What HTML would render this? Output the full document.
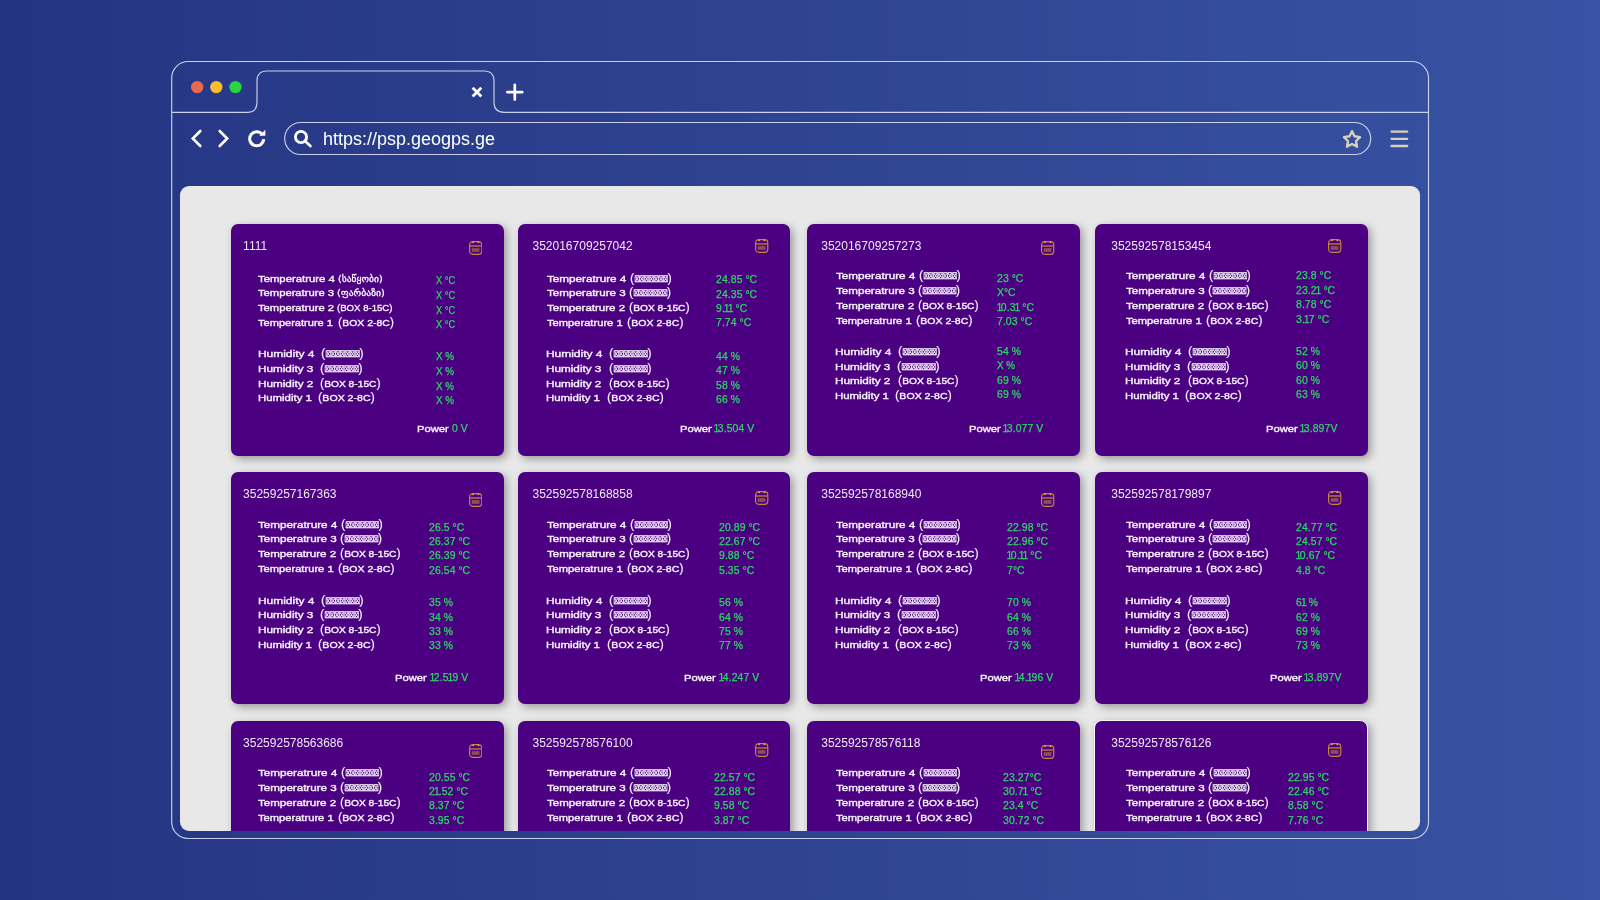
<!DOCTYPE html>
<html lang="en"><head><meta charset="utf-8"><title>psp.geogps.ge</title>
<style>
html,body{margin:0;padding:0}
body{width:1600px;height:900px;overflow:hidden;position:relative;background:linear-gradient(90deg,#243482 0%,#2e4492 50%,#3853a3 100%);font-family:"Liberation Sans",sans-serif}
#frame{position:absolute;left:0;top:0}
#content{position:absolute;left:180px;top:185.6px;width:1240.2px;height:645.2px;background:#e8e8e8;border-radius:9px;overflow:hidden}
#inner{position:absolute;left:-180px;top:-185.6px;width:1600px;height:900px;will-change:transform}
.card{position:absolute;background:#4b0082;border-radius:7px;box-shadow:3px 3px 9px rgba(0,0,0,.34)}
.card.hl{box-sizing:border-box;border:1.6px solid #f8f6fa;border-radius:8px}
.t{position:absolute;white-space:pre;line-height:14px;height:14px;transform-origin:0 0}
.ti{font-size:12.0px;color:#efe8f5}
.lb{font-size:9.9px;color:#f6f0fa;-webkit-text-stroke:.4px #f6f0fa}
.vl{font-size:10.2px;color:#30d468;-webkit-text-stroke:.25px #30d468}
.ge{font-family:"DejaVu Sans","Liberation Sans",sans-serif;font-size:9.3px;-webkit-text-stroke:.3px #fff}
.ar{-webkit-text-stroke:.3px #fff}
.n{letter-spacing:.1px}
.o{margin:0 -1px}
.o1{margin:0 -1.5px 0 -.5px}
.pa{font-size:12.2px;line-height:10px;position:relative;top:-.3px;-webkit-text-stroke:.12px #f6f0fa}
.bx{font-family:"DejaVu Sans",sans-serif;font-size:8.8px;letter-spacing:-.9px;-webkit-text-stroke:.28px #fff;display:inline-block;width:31.3px;transform:scaleX(.64);transform-origin:0 50%;line-height:10px}
.ic{position:absolute}
#url{position:absolute;left:322.9px;top:127px;font-size:18px;line-height:24px;color:#fff;white-space:pre;will-change:transform}
</style></head><body>
<svg id="frame" width="1600" height="900" viewBox="0 0 1600 900">
<g fill="none" stroke="#cbd0ea" stroke-width="1.15">
<rect x="171.7" y="61.5" width="1256.8" height="777" rx="16.5"/>
<path d="M171.7 112.3H247Q257 112.3 257 102.3V81Q257 71 267 71H484Q494 71 494 81V102.3Q494 112.3 504 112.3H1428.5"/>
<rect x="284.7" y="122.5" width="1086" height="32" rx="16"/>
</g>
<circle cx="197.2" cy="87.1" r="6.2" fill="#e96a4c"/>
<circle cx="216.3" cy="87.1" r="6.2" fill="#fdbc2c"/>
<circle cx="235.5" cy="87.1" r="6.2" fill="#28d442"/>
<g fill="none" stroke="#fff" stroke-linecap="round" stroke-linejoin="miter">
<path d="M472.6 87.8L481.3 96.5M481.3 87.8L472.6 96.5" stroke-width="2.7" stroke-linecap="butt"/>
<path d="M507.4 92.2H522.2M514.8 84.8V99.6" stroke-width="2.7"/>
<path d="M200.3 131L192.8 138.5L200.3 146" stroke-width="2.6"/>
<path d="M219.7 131L227.2 138.5L219.7 146" stroke-width="2.6"/>
<path d="M262.4 134.7A7 7 0 1 0 263.7 139.2" stroke-width="3" stroke-linecap="butt"/>
<circle cx="301" cy="137" r="5.6" stroke-width="2.9"/>
<path d="M305.2 141.3L310.4 146" stroke-width="2.7"/>
</g>
<path d="M265.3 129.8V135.8H259.3Z" fill="#fff"/>
<g fill="none" stroke="#d7d0be" stroke-linejoin="round" stroke-linecap="round">
<path d="M1352 131.2L1354.5 136.3L1360.1 137.1L1356 141L1357 146.6L1352 144L1347 146.6L1348 141L1343.9 137.1L1349.5 136.3Z" stroke-width="2.4"/>
<path d="M1391.5 131.6H1407.2M1391.5 138.8H1407.2M1391.5 146H1407.2" stroke-width="2.3"/>
</g>
</svg>

<div id="url">https://psp.geogps.ge</div>
<div id="content"><div id="inner">
<div class="card" style="left:230.75px;top:223.75px;width:273.00px;height:231.75px"></div>
<svg class="ic" style="left:468.65px;top:240.50px" width="13.4" height="14" viewBox="0 0 13.4 14"><rect x="0.6" y="0.6" width="12.2" height="12.8" rx="3.3" fill="none" stroke="#c8873e" stroke-width="1.15"/><path d="M0.8 5H12.6" stroke="#b9774a" stroke-width="1.4"/><circle cx="4.1" cy="1.35" r="0.95" fill="#e6a22e"/><circle cx="9.35" cy="1.35" r="0.95" fill="#e6a22e"/><rect x="2.7" y="6.9" width="7.9" height="4.1" fill="#c8873e" fill-opacity=".42"/><path d="M3.4 7.6V10.4M5.3 7.6V10.4M7.2 7.6V10.4M9.1 7.6V10.4" stroke="#c8873e" stroke-opacity=".55" stroke-width=".9"/></svg>
<div class="card" style="left:517.50px;top:223.75px;width:272.50px;height:231.75px"></div>
<svg class="ic" style="left:755.40px;top:239.00px" width="13.4" height="14" viewBox="0 0 13.4 14"><rect x="0.6" y="0.6" width="12.2" height="12.8" rx="3.3" fill="none" stroke="#c8873e" stroke-width="1.15"/><path d="M0.8 5H12.6" stroke="#b9774a" stroke-width="1.4"/><circle cx="4.1" cy="1.35" r="0.95" fill="#e6a22e"/><circle cx="9.35" cy="1.35" r="0.95" fill="#e6a22e"/><rect x="2.7" y="6.9" width="7.9" height="4.1" fill="#c8873e" fill-opacity=".42"/><path d="M3.4 7.6V10.4M5.3 7.6V10.4M7.2 7.6V10.4M9.1 7.6V10.4" stroke="#c8873e" stroke-opacity=".55" stroke-width=".9"/></svg>
<div class="card" style="left:806.50px;top:223.75px;width:273.00px;height:231.75px"></div>
<svg class="ic" style="left:1041.15px;top:240.50px" width="13.4" height="14" viewBox="0 0 13.4 14"><rect x="0.6" y="0.6" width="12.2" height="12.8" rx="3.3" fill="none" stroke="#c8873e" stroke-width="1.15"/><path d="M0.8 5H12.6" stroke="#b9774a" stroke-width="1.4"/><circle cx="4.1" cy="1.35" r="0.95" fill="#e6a22e"/><circle cx="9.35" cy="1.35" r="0.95" fill="#e6a22e"/><rect x="2.7" y="6.9" width="7.9" height="4.1" fill="#c8873e" fill-opacity=".42"/><path d="M3.4 7.6V10.4M5.3 7.6V10.4M7.2 7.6V10.4M9.1 7.6V10.4" stroke="#c8873e" stroke-opacity=".55" stroke-width=".9"/></svg>
<div class="card" style="left:1094.50px;top:223.75px;width:273.50px;height:231.75px"></div>
<svg class="ic" style="left:1328.15px;top:239.00px" width="13.4" height="14" viewBox="0 0 13.4 14"><rect x="0.6" y="0.6" width="12.2" height="12.8" rx="3.3" fill="none" stroke="#c8873e" stroke-width="1.15"/><path d="M0.8 5H12.6" stroke="#b9774a" stroke-width="1.4"/><circle cx="4.1" cy="1.35" r="0.95" fill="#e6a22e"/><circle cx="9.35" cy="1.35" r="0.95" fill="#e6a22e"/><rect x="2.7" y="6.9" width="7.9" height="4.1" fill="#c8873e" fill-opacity=".42"/><path d="M3.4 7.6V10.4M5.3 7.6V10.4M7.2 7.6V10.4M9.1 7.6V10.4" stroke="#c8873e" stroke-opacity=".55" stroke-width=".9"/></svg>
<div class="card" style="left:230.75px;top:472.00px;width:273.00px;height:231.75px"></div>
<svg class="ic" style="left:468.65px;top:492.75px" width="13.4" height="14" viewBox="0 0 13.4 14"><rect x="0.6" y="0.6" width="12.2" height="12.8" rx="3.3" fill="none" stroke="#c8873e" stroke-width="1.15"/><path d="M0.8 5H12.6" stroke="#b9774a" stroke-width="1.4"/><circle cx="4.1" cy="1.35" r="0.95" fill="#e6a22e"/><circle cx="9.35" cy="1.35" r="0.95" fill="#e6a22e"/><rect x="2.7" y="6.9" width="7.9" height="4.1" fill="#c8873e" fill-opacity=".42"/><path d="M3.4 7.6V10.4M5.3 7.6V10.4M7.2 7.6V10.4M9.1 7.6V10.4" stroke="#c8873e" stroke-opacity=".55" stroke-width=".9"/></svg>
<div class="card" style="left:517.50px;top:472.00px;width:272.50px;height:231.75px"></div>
<svg class="ic" style="left:755.40px;top:491.00px" width="13.4" height="14" viewBox="0 0 13.4 14"><rect x="0.6" y="0.6" width="12.2" height="12.8" rx="3.3" fill="none" stroke="#c8873e" stroke-width="1.15"/><path d="M0.8 5H12.6" stroke="#b9774a" stroke-width="1.4"/><circle cx="4.1" cy="1.35" r="0.95" fill="#e6a22e"/><circle cx="9.35" cy="1.35" r="0.95" fill="#e6a22e"/><rect x="2.7" y="6.9" width="7.9" height="4.1" fill="#c8873e" fill-opacity=".42"/><path d="M3.4 7.6V10.4M5.3 7.6V10.4M7.2 7.6V10.4M9.1 7.6V10.4" stroke="#c8873e" stroke-opacity=".55" stroke-width=".9"/></svg>
<div class="card" style="left:806.50px;top:472.00px;width:273.00px;height:231.75px"></div>
<svg class="ic" style="left:1041.15px;top:492.75px" width="13.4" height="14" viewBox="0 0 13.4 14"><rect x="0.6" y="0.6" width="12.2" height="12.8" rx="3.3" fill="none" stroke="#c8873e" stroke-width="1.15"/><path d="M0.8 5H12.6" stroke="#b9774a" stroke-width="1.4"/><circle cx="4.1" cy="1.35" r="0.95" fill="#e6a22e"/><circle cx="9.35" cy="1.35" r="0.95" fill="#e6a22e"/><rect x="2.7" y="6.9" width="7.9" height="4.1" fill="#c8873e" fill-opacity=".42"/><path d="M3.4 7.6V10.4M5.3 7.6V10.4M7.2 7.6V10.4M9.1 7.6V10.4" stroke="#c8873e" stroke-opacity=".55" stroke-width=".9"/></svg>
<div class="card" style="left:1094.50px;top:472.00px;width:273.50px;height:231.75px"></div>
<svg class="ic" style="left:1328.15px;top:491.00px" width="13.4" height="14" viewBox="0 0 13.4 14"><rect x="0.6" y="0.6" width="12.2" height="12.8" rx="3.3" fill="none" stroke="#c8873e" stroke-width="1.15"/><path d="M0.8 5H12.6" stroke="#b9774a" stroke-width="1.4"/><circle cx="4.1" cy="1.35" r="0.95" fill="#e6a22e"/><circle cx="9.35" cy="1.35" r="0.95" fill="#e6a22e"/><rect x="2.7" y="6.9" width="7.9" height="4.1" fill="#c8873e" fill-opacity=".42"/><path d="M3.4 7.6V10.4M5.3 7.6V10.4M7.2 7.6V10.4M9.1 7.6V10.4" stroke="#c8873e" stroke-opacity=".55" stroke-width=".9"/></svg>
<div class="card" style="left:230.75px;top:721.25px;width:273.00px;height:231.75px"></div>
<svg class="ic" style="left:468.65px;top:744.25px" width="13.4" height="14" viewBox="0 0 13.4 14"><rect x="0.6" y="0.6" width="12.2" height="12.8" rx="3.3" fill="none" stroke="#c8873e" stroke-width="1.15"/><path d="M0.8 5H12.6" stroke="#b9774a" stroke-width="1.4"/><circle cx="4.1" cy="1.35" r="0.95" fill="#e6a22e"/><circle cx="9.35" cy="1.35" r="0.95" fill="#e6a22e"/><rect x="2.7" y="6.9" width="7.9" height="4.1" fill="#c8873e" fill-opacity=".42"/><path d="M3.4 7.6V10.4M5.3 7.6V10.4M7.2 7.6V10.4M9.1 7.6V10.4" stroke="#c8873e" stroke-opacity=".55" stroke-width=".9"/></svg>
<div class="card" style="left:517.50px;top:721.25px;width:272.50px;height:231.75px"></div>
<svg class="ic" style="left:755.40px;top:742.75px" width="13.4" height="14" viewBox="0 0 13.4 14"><rect x="0.6" y="0.6" width="12.2" height="12.8" rx="3.3" fill="none" stroke="#c8873e" stroke-width="1.15"/><path d="M0.8 5H12.6" stroke="#b9774a" stroke-width="1.4"/><circle cx="4.1" cy="1.35" r="0.95" fill="#e6a22e"/><circle cx="9.35" cy="1.35" r="0.95" fill="#e6a22e"/><rect x="2.7" y="6.9" width="7.9" height="4.1" fill="#c8873e" fill-opacity=".42"/><path d="M3.4 7.6V10.4M5.3 7.6V10.4M7.2 7.6V10.4M9.1 7.6V10.4" stroke="#c8873e" stroke-opacity=".55" stroke-width=".9"/></svg>
<div class="card" style="left:806.50px;top:721.25px;width:273.00px;height:231.75px"></div>
<svg class="ic" style="left:1041.15px;top:744.75px" width="13.4" height="14" viewBox="0 0 13.4 14"><rect x="0.6" y="0.6" width="12.2" height="12.8" rx="3.3" fill="none" stroke="#c8873e" stroke-width="1.15"/><path d="M0.8 5H12.6" stroke="#b9774a" stroke-width="1.4"/><circle cx="4.1" cy="1.35" r="0.95" fill="#e6a22e"/><circle cx="9.35" cy="1.35" r="0.95" fill="#e6a22e"/><rect x="2.7" y="6.9" width="7.9" height="4.1" fill="#c8873e" fill-opacity=".42"/><path d="M3.4 7.6V10.4M5.3 7.6V10.4M7.2 7.6V10.4M9.1 7.6V10.4" stroke="#c8873e" stroke-opacity=".55" stroke-width=".9"/></svg>
<div class="card hl" style="left:1093.8px;top:720.2px;width:274.4px;height:232.75px"></div>
<svg class="ic" style="left:1328.15px;top:742.75px" width="13.4" height="14" viewBox="0 0 13.4 14"><rect x="0.6" y="0.6" width="12.2" height="12.8" rx="3.3" fill="none" stroke="#c8873e" stroke-width="1.15"/><path d="M0.8 5H12.6" stroke="#b9774a" stroke-width="1.4"/><circle cx="4.1" cy="1.35" r="0.95" fill="#e6a22e"/><circle cx="9.35" cy="1.35" r="0.95" fill="#e6a22e"/><rect x="2.7" y="6.9" width="7.9" height="4.1" fill="#c8873e" fill-opacity=".42"/><path d="M3.4 7.6V10.4M5.3 7.6V10.4M7.2 7.6V10.4M9.1 7.6V10.4" stroke="#c8873e" stroke-opacity=".55" stroke-width=".9"/></svg>
<div class="t ti" style="left:243.10px;top:239px">1111</div>
<div class="t lb" style="left:258.10px;top:272px;transform:scaleX(1.1453)">Temperatrure 4</div>
<div class="t lb" style="left:338.10px;top:272px;transform:scaleX(1.0302)"><span class="ge">(საწყობი)</span></div>
<div class="t lb" style="left:257.50px;top:347px;transform:scaleX(1.2088)">Humidity 4</div>
<div class="t lb" style="left:320.60px;top:347px;transform:scaleX(1.0832)"><span class="pa">(</span><span class="bx">☒☒☒☒☒☒☒</span><span class="pa">)</span></div>
<div class="t vl" style="left:435.75px;top:274px;transform:scaleX(0.9068)">X °C</div>
<div class="t vl" style="left:435.75px;top:350px;transform:scaleX(0.9686)">X %</div>
<div class="t lb" style="left:258.10px;top:286px;transform:scaleX(1.1349)">Temperatrure 3</div>
<div class="t lb" style="left:337.40px;top:286px;transform:scaleX(1.0359)"><span class="ge">(ფარბაზი)</span></div>
<div class="t lb" style="left:257.50px;top:362px;transform:scaleX(1.1874)">Humidity 3</div>
<div class="t lb" style="left:319.70px;top:362px;transform:scaleX(1.0832)"><span class="pa">(</span><span class="bx">☒☒☒☒☒☒☒</span><span class="pa">)</span></div>
<div class="t vl" style="left:435.75px;top:289px;transform:scaleX(0.9068)">X °C</div>
<div class="t vl" style="left:435.75px;top:365px;transform:scaleX(0.9686)">X %</div>
<div class="t lb" style="left:258.10px;top:301px;transform:scaleX(1.1349)">Temperatrure 2</div>
<div class="t lb" style="left:337.10px;top:301px;transform:scaleX(0.9724)"><span class="ar">(BOX 8-15C)</span></div>
<div class="t lb" style="left:257.50px;top:377px;transform:scaleX(1.1874)">Humidity 2</div>
<div class="t lb" style="left:319.95px;top:377px;transform:scaleX(1.0345)"><span class="pa">(</span>BOX 8-15C<span class="pa">)</span></div>
<div class="t vl" style="left:435.75px;top:304px;transform:scaleX(0.9068)">X °C</div>
<div class="t vl" style="left:435.75px;top:380px;transform:scaleX(0.9686)">X %</div>
<div class="t lb" style="left:258.10px;top:316px;transform:scaleX(1.1199)">Temperatrure 1</div>
<div class="t lb" style="left:338.10px;top:316px;transform:scaleX(1.0538)"><span class="pa">(</span>BOX 2-8C<span class="pa">)</span></div>
<div class="t lb" style="left:257.50px;top:391px;transform:scaleX(1.1553)">Humidity 1</div>
<div class="t lb" style="left:317.80px;top:391px;transform:scaleX(1.0707)"><span class="pa">(</span>BOX 2-8C<span class="pa">)</span></div>
<div class="t vl" style="left:435.75px;top:318px;transform:scaleX(0.9068)">X °C</div>
<div class="t vl" style="left:435.75px;top:394px;transform:scaleX(0.9686)">X %</div>
<div class="t lb" style="left:416.90px;top:422px;transform:scaleX(1.1321)">Power</div>
<div class="t vl" style="left:451.70px;top:422px;transform:scaleX(1.0200)"><span class="n">0</span> V</div>
<div class="t ti" style="left:532.50px;top:239px">352016709257042</div>
<div class="t lb" style="left:546.90px;top:272px;transform:scaleX(1.1849)">Temperatrure 4</div>
<div class="t lb" style="left:630.00px;top:272px;transform:scaleX(1.0629)"><span class="pa">(</span><span class="bx">☒☒☒☒☒☒☒</span><span class="pa">)</span></div>
<div class="t lb" style="left:546.30px;top:347px;transform:scaleX(1.2088)">Humidity 4</div>
<div class="t lb" style="left:609.40px;top:347px;transform:scaleX(1.0832)"><span class="pa">(</span><span class="bx">☒☒☒☒☒☒☒</span><span class="pa">)</span></div>
<div class="t vl" style="left:716.25px;top:273px;transform:scaleX(1.0200)"><span class="n">24.85</span> °C</div>
<div class="t vl" style="left:716.25px;top:350px;transform:scaleX(1.0200)"><span class="n">44</span> %</div>
<div class="t lb" style="left:546.90px;top:286px;transform:scaleX(1.1752)">Temperatrure 3</div>
<div class="t lb" style="left:629.00px;top:286px;transform:scaleX(1.0705)"><span class="pa">(</span><span class="bx">☒☒☒☒☒☒☒</span><span class="pa">)</span></div>
<div class="t lb" style="left:546.30px;top:362px;transform:scaleX(1.1874)">Humidity 3</div>
<div class="t lb" style="left:608.50px;top:362px;transform:scaleX(1.0832)"><span class="pa">(</span><span class="bx">☒☒☒☒☒☒☒</span><span class="pa">)</span></div>
<div class="t vl" style="left:716.25px;top:288px;transform:scaleX(1.0200)"><span class="n">24.35</span> °C</div>
<div class="t vl" style="left:716.25px;top:364px;transform:scaleX(1.0200)"><span class="n">47</span> %</div>
<div class="t lb" style="left:546.90px;top:301px;transform:scaleX(1.1662)">Temperatrure 2</div>
<div class="t lb" style="left:628.75px;top:301px;transform:scaleX(1.0345)"><span class="pa">(</span>BOX 8-15C<span class="pa">)</span></div>
<div class="t lb" style="left:546.30px;top:377px;transform:scaleX(1.1874)">Humidity 2</div>
<div class="t lb" style="left:608.75px;top:377px;transform:scaleX(1.0345)"><span class="pa">(</span>BOX 8-15C<span class="pa">)</span></div>
<div class="t vl" style="left:716.25px;top:302px;transform:scaleX(1.0200)"><span class="n">9.<span class="o">1</span><span class="o">1</span></span> °C</div>
<div class="t vl" style="left:716.25px;top:379px;transform:scaleX(1.0200)"><span class="n">58</span> %</div>
<div class="t lb" style="left:546.90px;top:316px;transform:scaleX(1.1289)">Temperatrure 1</div>
<div class="t lb" style="left:626.90px;top:316px;transform:scaleX(1.0651)"><span class="pa">(</span>BOX 2-8C<span class="pa">)</span></div>
<div class="t lb" style="left:546.30px;top:391px;transform:scaleX(1.1553)">Humidity 1</div>
<div class="t lb" style="left:606.60px;top:391px;transform:scaleX(1.0707)"><span class="pa">(</span>BOX 2-8C<span class="pa">)</span></div>
<div class="t vl" style="left:716.25px;top:316px;transform:scaleX(1.0200)"><span class="n">7.74</span> °C</div>
<div class="t vl" style="left:716.25px;top:393px;transform:scaleX(1.0200)"><span class="n">66</span> %</div>
<div class="t lb" style="left:680.00px;top:422px;transform:scaleX(1.1321)">Power</div>
<div class="t vl" style="left:714.40px;top:422px;transform:scaleX(1.0200)"><span class="n"><span class="o1">1</span>3.504</span> V</div>
<div class="t ti" style="left:821.25px;top:239px">352016709257273</div>
<div class="t lb" style="left:835.75px;top:269px;transform:scaleX(1.1849)">Temperatrure 4</div>
<div class="t lb" style="left:918.85px;top:269px;transform:scaleX(1.0629)"><span class="pa">(</span><span class="bx">☒☒☒☒☒☒☒</span><span class="pa">)</span></div>
<div class="t lb" style="left:835.15px;top:345px;transform:scaleX(1.2088)">Humidity 4</div>
<div class="t lb" style="left:898.25px;top:345px;transform:scaleX(1.0832)"><span class="pa">(</span><span class="bx">☒☒☒☒☒☒☒</span><span class="pa">)</span></div>
<div class="t vl" style="left:997.00px;top:272px;transform:scaleX(1.0200)"><span class="n">23</span> °C</div>
<div class="t vl" style="left:997.00px;top:345px;transform:scaleX(1.0200)"><span class="n">54</span> %</div>
<div class="t lb" style="left:835.75px;top:284px;transform:scaleX(1.1752)">Temperatrure 3</div>
<div class="t lb" style="left:917.85px;top:284px;transform:scaleX(1.0705)"><span class="pa">(</span><span class="bx">☒☒☒☒☒☒☒</span><span class="pa">)</span></div>
<div class="t lb" style="left:835.15px;top:360px;transform:scaleX(1.1874)">Humidity 3</div>
<div class="t lb" style="left:897.35px;top:360px;transform:scaleX(1.0832)"><span class="pa">(</span><span class="bx">☒☒☒☒☒☒☒</span><span class="pa">)</span></div>
<div class="t vl" style="left:997.00px;top:286px;transform:scaleX(1.0200)">X°C</div>
<div class="t vl" style="left:997.00px;top:359px;transform:scaleX(0.9686)">X %</div>
<div class="t lb" style="left:835.75px;top:299px;transform:scaleX(1.1662)">Temperatrure 2</div>
<div class="t lb" style="left:917.60px;top:299px;transform:scaleX(1.0345)"><span class="pa">(</span>BOX 8-15C<span class="pa">)</span></div>
<div class="t lb" style="left:835.15px;top:374px;transform:scaleX(1.1874)">Humidity 2</div>
<div class="t lb" style="left:897.60px;top:374px;transform:scaleX(1.0345)"><span class="pa">(</span>BOX 8-15C<span class="pa">)</span></div>
<div class="t vl" style="left:997.00px;top:301px;transform:scaleX(1.0200)"><span class="n"><span class="o1">1</span>0.3<span class="o">1</span></span> °C</div>
<div class="t vl" style="left:997.00px;top:374px;transform:scaleX(1.0200)"><span class="n">69</span> %</div>
<div class="t lb" style="left:835.75px;top:314px;transform:scaleX(1.1289)">Temperatrure 1</div>
<div class="t lb" style="left:915.75px;top:314px;transform:scaleX(1.0651)"><span class="pa">(</span>BOX 2-8C<span class="pa">)</span></div>
<div class="t lb" style="left:835.15px;top:389px;transform:scaleX(1.1553)">Humidity 1</div>
<div class="t lb" style="left:895.45px;top:389px;transform:scaleX(1.0707)"><span class="pa">(</span>BOX 2-8C<span class="pa">)</span></div>
<div class="t vl" style="left:997.00px;top:315px;transform:scaleX(1.0200)"><span class="n">7.03</span> °C</div>
<div class="t vl" style="left:997.00px;top:388px;transform:scaleX(1.0200)"><span class="n">69</span> %</div>
<div class="t lb" style="left:968.90px;top:422px;transform:scaleX(1.1321)">Power</div>
<div class="t vl" style="left:1003.00px;top:422px;transform:scaleX(1.0200)"><span class="n"><span class="o1">1</span>3.077</span> V</div>
<div class="t ti" style="left:1111.25px;top:239px">352592578153454</div>
<div class="t lb" style="left:1125.75px;top:269px;transform:scaleX(1.1849)">Temperatrure 4</div>
<div class="t lb" style="left:1208.85px;top:269px;transform:scaleX(1.0629)"><span class="pa">(</span><span class="bx">☒☒☒☒☒☒☒</span><span class="pa">)</span></div>
<div class="t lb" style="left:1125.15px;top:345px;transform:scaleX(1.2088)">Humidity 4</div>
<div class="t lb" style="left:1188.25px;top:345px;transform:scaleX(1.0832)"><span class="pa">(</span><span class="bx">☒☒☒☒☒☒☒</span><span class="pa">)</span></div>
<div class="t vl" style="left:1295.50px;top:269px;transform:scaleX(1.0200)"><span class="n">23.8</span> °C</div>
<div class="t vl" style="left:1295.50px;top:345px;transform:scaleX(1.0200)"><span class="n">52</span> %</div>
<div class="t lb" style="left:1125.75px;top:284px;transform:scaleX(1.1752)">Temperatrure 3</div>
<div class="t lb" style="left:1207.85px;top:284px;transform:scaleX(1.0705)"><span class="pa">(</span><span class="bx">☒☒☒☒☒☒☒</span><span class="pa">)</span></div>
<div class="t lb" style="left:1125.15px;top:360px;transform:scaleX(1.1874)">Humidity 3</div>
<div class="t lb" style="left:1187.35px;top:360px;transform:scaleX(1.0832)"><span class="pa">(</span><span class="bx">☒☒☒☒☒☒☒</span><span class="pa">)</span></div>
<div class="t vl" style="left:1295.50px;top:284px;transform:scaleX(1.0200)"><span class="n">23.2<span class="o">1</span></span> °C</div>
<div class="t vl" style="left:1295.50px;top:359px;transform:scaleX(1.0200)"><span class="n">60</span> %</div>
<div class="t lb" style="left:1125.75px;top:299px;transform:scaleX(1.1662)">Temperatrure 2</div>
<div class="t lb" style="left:1207.60px;top:299px;transform:scaleX(1.0345)"><span class="pa">(</span>BOX 8-15C<span class="pa">)</span></div>
<div class="t lb" style="left:1125.15px;top:374px;transform:scaleX(1.1874)">Humidity 2</div>
<div class="t lb" style="left:1187.60px;top:374px;transform:scaleX(1.0345)"><span class="pa">(</span>BOX 8-15C<span class="pa">)</span></div>
<div class="t vl" style="left:1295.50px;top:298px;transform:scaleX(1.0200)"><span class="n">8.78</span> °C</div>
<div class="t vl" style="left:1295.50px;top:374px;transform:scaleX(1.0200)"><span class="n">60</span> %</div>
<div class="t lb" style="left:1125.75px;top:314px;transform:scaleX(1.1289)">Temperatrure 1</div>
<div class="t lb" style="left:1205.75px;top:314px;transform:scaleX(1.0651)"><span class="pa">(</span>BOX 2-8C<span class="pa">)</span></div>
<div class="t lb" style="left:1125.15px;top:389px;transform:scaleX(1.1553)">Humidity 1</div>
<div class="t lb" style="left:1185.45px;top:389px;transform:scaleX(1.0707)"><span class="pa">(</span>BOX 2-8C<span class="pa">)</span></div>
<div class="t vl" style="left:1295.50px;top:313px;transform:scaleX(1.0200)"><span class="n">3.<span class="o">1</span>7</span> °C</div>
<div class="t vl" style="left:1295.50px;top:388px;transform:scaleX(1.0200)"><span class="n">63</span> %</div>
<div class="t lb" style="left:1265.65px;top:422px;transform:scaleX(1.1321)">Power</div>
<div class="t vl" style="left:1299.50px;top:422px;transform:scaleX(1.0200)"><span class="n"><span class="o1">1</span>3.897</span>V</div>
<div class="t ti" style="left:243.10px;top:487px">35259257167363</div>
<div class="t lb" style="left:258.10px;top:518px;transform:scaleX(1.1849)">Temperatrure 4</div>
<div class="t lb" style="left:341.20px;top:518px;transform:scaleX(1.0629)"><span class="pa">(</span><span class="bx">☒☒☒☒☒☒☒</span><span class="pa">)</span></div>
<div class="t lb" style="left:257.50px;top:594px;transform:scaleX(1.2088)">Humidity 4</div>
<div class="t lb" style="left:320.60px;top:594px;transform:scaleX(1.0832)"><span class="pa">(</span><span class="bx">☒☒☒☒☒☒☒</span><span class="pa">)</span></div>
<div class="t vl" style="left:429.00px;top:521px;transform:scaleX(1.0200)"><span class="n">26.5</span> °C</div>
<div class="t vl" style="left:429.00px;top:596px;transform:scaleX(1.0200)"><span class="n">35</span> %</div>
<div class="t lb" style="left:258.10px;top:532px;transform:scaleX(1.1752)">Temperatrure 3</div>
<div class="t lb" style="left:340.20px;top:532px;transform:scaleX(1.0705)"><span class="pa">(</span><span class="bx">☒☒☒☒☒☒☒</span><span class="pa">)</span></div>
<div class="t lb" style="left:257.50px;top:608px;transform:scaleX(1.1874)">Humidity 3</div>
<div class="t lb" style="left:319.70px;top:608px;transform:scaleX(1.0832)"><span class="pa">(</span><span class="bx">☒☒☒☒☒☒☒</span><span class="pa">)</span></div>
<div class="t vl" style="left:429.00px;top:535px;transform:scaleX(1.0200)"><span class="n">26.37</span> °C</div>
<div class="t vl" style="left:429.00px;top:611px;transform:scaleX(1.0200)"><span class="n">34</span> %</div>
<div class="t lb" style="left:258.10px;top:547px;transform:scaleX(1.1662)">Temperatrure 2</div>
<div class="t lb" style="left:339.95px;top:547px;transform:scaleX(1.0345)"><span class="pa">(</span>BOX 8-15C<span class="pa">)</span></div>
<div class="t lb" style="left:257.50px;top:623px;transform:scaleX(1.1874)">Humidity 2</div>
<div class="t lb" style="left:319.95px;top:623px;transform:scaleX(1.0345)"><span class="pa">(</span>BOX 8-15C<span class="pa">)</span></div>
<div class="t vl" style="left:429.00px;top:549px;transform:scaleX(1.0200)"><span class="n">26.39</span> °C</div>
<div class="t vl" style="left:429.00px;top:625px;transform:scaleX(1.0200)"><span class="n">33</span> %</div>
<div class="t lb" style="left:258.10px;top:562px;transform:scaleX(1.1289)">Temperatrure 1</div>
<div class="t lb" style="left:338.10px;top:562px;transform:scaleX(1.0651)"><span class="pa">(</span>BOX 2-8C<span class="pa">)</span></div>
<div class="t lb" style="left:257.50px;top:638px;transform:scaleX(1.1553)">Humidity 1</div>
<div class="t lb" style="left:317.80px;top:638px;transform:scaleX(1.0707)"><span class="pa">(</span>BOX 2-8C<span class="pa">)</span></div>
<div class="t vl" style="left:429.00px;top:564px;transform:scaleX(1.0200)"><span class="n">26.54</span> °C</div>
<div class="t vl" style="left:429.00px;top:639px;transform:scaleX(1.0200)"><span class="n">33</span> %</div>
<div class="t lb" style="left:395.15px;top:671px;transform:scaleX(1.1321)">Power</div>
<div class="t vl" style="left:430.00px;top:671px;transform:scaleX(1.0200)"><span class="n"><span class="o1">1</span>2.5<span class="o">1</span>9</span> V</div>
<div class="t ti" style="left:532.50px;top:487px">352592578168858</div>
<div class="t lb" style="left:546.90px;top:518px;transform:scaleX(1.1849)">Temperatrure 4</div>
<div class="t lb" style="left:630.00px;top:518px;transform:scaleX(1.0629)"><span class="pa">(</span><span class="bx">☒☒☒☒☒☒☒</span><span class="pa">)</span></div>
<div class="t lb" style="left:546.30px;top:594px;transform:scaleX(1.2088)">Humidity 4</div>
<div class="t lb" style="left:609.40px;top:594px;transform:scaleX(1.0832)"><span class="pa">(</span><span class="bx">☒☒☒☒☒☒☒</span><span class="pa">)</span></div>
<div class="t vl" style="left:719.00px;top:521px;transform:scaleX(1.0200)"><span class="n">20.89</span> °C</div>
<div class="t vl" style="left:719.00px;top:596px;transform:scaleX(1.0200)"><span class="n">56</span> %</div>
<div class="t lb" style="left:546.90px;top:532px;transform:scaleX(1.1752)">Temperatrure 3</div>
<div class="t lb" style="left:629.00px;top:532px;transform:scaleX(1.0705)"><span class="pa">(</span><span class="bx">☒☒☒☒☒☒☒</span><span class="pa">)</span></div>
<div class="t lb" style="left:546.30px;top:608px;transform:scaleX(1.1874)">Humidity 3</div>
<div class="t lb" style="left:608.50px;top:608px;transform:scaleX(1.0832)"><span class="pa">(</span><span class="bx">☒☒☒☒☒☒☒</span><span class="pa">)</span></div>
<div class="t vl" style="left:719.00px;top:535px;transform:scaleX(1.0200)"><span class="n">22.67</span> °C</div>
<div class="t vl" style="left:719.00px;top:611px;transform:scaleX(1.0200)"><span class="n">64</span> %</div>
<div class="t lb" style="left:546.90px;top:547px;transform:scaleX(1.1662)">Temperatrure 2</div>
<div class="t lb" style="left:628.75px;top:547px;transform:scaleX(1.0345)"><span class="pa">(</span>BOX 8-15C<span class="pa">)</span></div>
<div class="t lb" style="left:546.30px;top:623px;transform:scaleX(1.1874)">Humidity 2</div>
<div class="t lb" style="left:608.75px;top:623px;transform:scaleX(1.0345)"><span class="pa">(</span>BOX 8-15C<span class="pa">)</span></div>
<div class="t vl" style="left:719.00px;top:549px;transform:scaleX(1.0200)"><span class="n">9.88</span> °C</div>
<div class="t vl" style="left:719.00px;top:625px;transform:scaleX(1.0200)"><span class="n">75</span> %</div>
<div class="t lb" style="left:546.90px;top:562px;transform:scaleX(1.1289)">Temperatrure 1</div>
<div class="t lb" style="left:626.90px;top:562px;transform:scaleX(1.0651)"><span class="pa">(</span>BOX 2-8C<span class="pa">)</span></div>
<div class="t lb" style="left:546.30px;top:638px;transform:scaleX(1.1553)">Humidity 1</div>
<div class="t lb" style="left:606.60px;top:638px;transform:scaleX(1.0707)"><span class="pa">(</span>BOX 2-8C<span class="pa">)</span></div>
<div class="t vl" style="left:719.00px;top:564px;transform:scaleX(1.0200)"><span class="n">5.35</span> °C</div>
<div class="t vl" style="left:719.00px;top:639px;transform:scaleX(1.0200)"><span class="n">77</span> %</div>
<div class="t lb" style="left:684.40px;top:671px;transform:scaleX(1.1321)">Power</div>
<div class="t vl" style="left:719.00px;top:671px;transform:scaleX(1.0200)"><span class="n"><span class="o1">1</span>4.247</span> V</div>
<div class="t ti" style="left:821.25px;top:487px">352592578168940</div>
<div class="t lb" style="left:835.75px;top:518px;transform:scaleX(1.1849)">Temperatrure 4</div>
<div class="t lb" style="left:918.85px;top:518px;transform:scaleX(1.0629)"><span class="pa">(</span><span class="bx">☒☒☒☒☒☒☒</span><span class="pa">)</span></div>
<div class="t lb" style="left:835.15px;top:594px;transform:scaleX(1.2088)">Humidity 4</div>
<div class="t lb" style="left:898.25px;top:594px;transform:scaleX(1.0832)"><span class="pa">(</span><span class="bx">☒☒☒☒☒☒☒</span><span class="pa">)</span></div>
<div class="t vl" style="left:1007.00px;top:521px;transform:scaleX(1.0200)"><span class="n">22.98</span> °C</div>
<div class="t vl" style="left:1007.00px;top:596px;transform:scaleX(1.0200)"><span class="n">70</span> %</div>
<div class="t lb" style="left:835.75px;top:532px;transform:scaleX(1.1752)">Temperatrure 3</div>
<div class="t lb" style="left:917.85px;top:532px;transform:scaleX(1.0705)"><span class="pa">(</span><span class="bx">☒☒☒☒☒☒☒</span><span class="pa">)</span></div>
<div class="t lb" style="left:835.15px;top:608px;transform:scaleX(1.1874)">Humidity 3</div>
<div class="t lb" style="left:897.35px;top:608px;transform:scaleX(1.0832)"><span class="pa">(</span><span class="bx">☒☒☒☒☒☒☒</span><span class="pa">)</span></div>
<div class="t vl" style="left:1007.00px;top:535px;transform:scaleX(1.0200)"><span class="n">22.96</span> °C</div>
<div class="t vl" style="left:1007.00px;top:611px;transform:scaleX(1.0200)"><span class="n">64</span> %</div>
<div class="t lb" style="left:835.75px;top:547px;transform:scaleX(1.1662)">Temperatrure 2</div>
<div class="t lb" style="left:917.60px;top:547px;transform:scaleX(1.0345)"><span class="pa">(</span>BOX 8-15C<span class="pa">)</span></div>
<div class="t lb" style="left:835.15px;top:623px;transform:scaleX(1.1874)">Humidity 2</div>
<div class="t lb" style="left:897.60px;top:623px;transform:scaleX(1.0345)"><span class="pa">(</span>BOX 8-15C<span class="pa">)</span></div>
<div class="t vl" style="left:1007.00px;top:549px;transform:scaleX(1.0200)"><span class="n"><span class="o1">1</span>0.<span class="o">1</span><span class="o">1</span></span> °C</div>
<div class="t vl" style="left:1007.00px;top:625px;transform:scaleX(1.0200)"><span class="n">66</span> %</div>
<div class="t lb" style="left:835.75px;top:562px;transform:scaleX(1.1289)">Temperatrure 1</div>
<div class="t lb" style="left:915.75px;top:562px;transform:scaleX(1.0651)"><span class="pa">(</span>BOX 2-8C<span class="pa">)</span></div>
<div class="t lb" style="left:835.15px;top:638px;transform:scaleX(1.1553)">Humidity 1</div>
<div class="t lb" style="left:895.45px;top:638px;transform:scaleX(1.0707)"><span class="pa">(</span>BOX 2-8C<span class="pa">)</span></div>
<div class="t vl" style="left:1007.00px;top:564px;transform:scaleX(1.0200)"><span class="n">7</span>°C</div>
<div class="t vl" style="left:1007.00px;top:639px;transform:scaleX(1.0200)"><span class="n">73</span> %</div>
<div class="t lb" style="left:979.90px;top:671px;transform:scaleX(1.1321)">Power</div>
<div class="t vl" style="left:1014.50px;top:671px;transform:scaleX(1.0200)"><span class="n"><span class="o1">1</span>4.<span class="o">1</span>96</span> V</div>
<div class="t ti" style="left:1111.25px;top:487px">352592578179897</div>
<div class="t lb" style="left:1125.75px;top:518px;transform:scaleX(1.1849)">Temperatrure 4</div>
<div class="t lb" style="left:1208.85px;top:518px;transform:scaleX(1.0629)"><span class="pa">(</span><span class="bx">☒☒☒☒☒☒☒</span><span class="pa">)</span></div>
<div class="t lb" style="left:1125.15px;top:594px;transform:scaleX(1.2088)">Humidity 4</div>
<div class="t lb" style="left:1188.25px;top:594px;transform:scaleX(1.0832)"><span class="pa">(</span><span class="bx">☒☒☒☒☒☒☒</span><span class="pa">)</span></div>
<div class="t vl" style="left:1295.50px;top:521px;transform:scaleX(1.0200)"><span class="n">24.77</span> °C</div>
<div class="t vl" style="left:1295.50px;top:596px;transform:scaleX(1.0200)"><span class="n">6<span class="o">1</span></span> %</div>
<div class="t lb" style="left:1125.75px;top:532px;transform:scaleX(1.1752)">Temperatrure 3</div>
<div class="t lb" style="left:1207.85px;top:532px;transform:scaleX(1.0705)"><span class="pa">(</span><span class="bx">☒☒☒☒☒☒☒</span><span class="pa">)</span></div>
<div class="t lb" style="left:1125.15px;top:608px;transform:scaleX(1.1874)">Humidity 3</div>
<div class="t lb" style="left:1187.35px;top:608px;transform:scaleX(1.0832)"><span class="pa">(</span><span class="bx">☒☒☒☒☒☒☒</span><span class="pa">)</span></div>
<div class="t vl" style="left:1295.50px;top:535px;transform:scaleX(1.0200)"><span class="n">24.57</span> °C</div>
<div class="t vl" style="left:1295.50px;top:611px;transform:scaleX(1.0200)"><span class="n">62</span> %</div>
<div class="t lb" style="left:1125.75px;top:547px;transform:scaleX(1.1662)">Temperatrure 2</div>
<div class="t lb" style="left:1207.60px;top:547px;transform:scaleX(1.0345)"><span class="pa">(</span>BOX 8-15C<span class="pa">)</span></div>
<div class="t lb" style="left:1125.15px;top:623px;transform:scaleX(1.1874)">Humidity 2</div>
<div class="t lb" style="left:1187.60px;top:623px;transform:scaleX(1.0345)"><span class="pa">(</span>BOX 8-15C<span class="pa">)</span></div>
<div class="t vl" style="left:1295.50px;top:549px;transform:scaleX(1.0200)"><span class="n"><span class="o1">1</span>0.67</span> °C</div>
<div class="t vl" style="left:1295.50px;top:625px;transform:scaleX(1.0200)"><span class="n">69</span> %</div>
<div class="t lb" style="left:1125.75px;top:562px;transform:scaleX(1.1289)">Temperatrure 1</div>
<div class="t lb" style="left:1205.75px;top:562px;transform:scaleX(1.0651)"><span class="pa">(</span>BOX 2-8C<span class="pa">)</span></div>
<div class="t lb" style="left:1125.15px;top:638px;transform:scaleX(1.1553)">Humidity 1</div>
<div class="t lb" style="left:1185.45px;top:638px;transform:scaleX(1.0707)"><span class="pa">(</span>BOX 2-8C<span class="pa">)</span></div>
<div class="t vl" style="left:1295.50px;top:564px;transform:scaleX(1.0200)"><span class="n">4.8</span> °C</div>
<div class="t vl" style="left:1295.50px;top:639px;transform:scaleX(1.0200)"><span class="n">73</span> %</div>
<div class="t lb" style="left:1269.90px;top:671px;transform:scaleX(1.1321)">Power</div>
<div class="t vl" style="left:1304.25px;top:671px;transform:scaleX(1.0200)"><span class="n"><span class="o1">1</span>3.897</span>V</div>
<div class="t ti" style="left:243.10px;top:736px">352592578563686</div>
<div class="t lb" style="left:258.10px;top:766px;transform:scaleX(1.1849)">Temperatrure 4</div>
<div class="t lb" style="left:341.20px;top:766px;transform:scaleX(1.0629)"><span class="pa">(</span><span class="bx">☒☒☒☒☒☒☒</span><span class="pa">)</span></div>
<div class="t vl" style="left:429.25px;top:771px;transform:scaleX(1.0200)"><span class="n">20.55</span> °C</div>
<div class="t lb" style="left:258.10px;top:781px;transform:scaleX(1.1752)">Temperatrure 3</div>
<div class="t lb" style="left:340.20px;top:781px;transform:scaleX(1.0705)"><span class="pa">(</span><span class="bx">☒☒☒☒☒☒☒</span><span class="pa">)</span></div>
<div class="t vl" style="left:429.25px;top:785px;transform:scaleX(1.0200)"><span class="n">2<span class="o">1</span>.52</span> °C</div>
<div class="t lb" style="left:258.10px;top:796px;transform:scaleX(1.1662)">Temperatrure 2</div>
<div class="t lb" style="left:339.95px;top:796px;transform:scaleX(1.0345)"><span class="pa">(</span>BOX 8-15C<span class="pa">)</span></div>
<div class="t vl" style="left:429.25px;top:799px;transform:scaleX(1.0200)"><span class="n">8.37</span> °C</div>
<div class="t lb" style="left:258.10px;top:811px;transform:scaleX(1.1289)">Temperatrure 1</div>
<div class="t lb" style="left:338.10px;top:811px;transform:scaleX(1.0651)"><span class="pa">(</span>BOX 2-8C<span class="pa">)</span></div>
<div class="t vl" style="left:429.25px;top:814px;transform:scaleX(1.0200)"><span class="n">3.95</span> °C</div>
<div class="t ti" style="left:532.50px;top:736px">352592578576100</div>
<div class="t lb" style="left:546.90px;top:766px;transform:scaleX(1.1849)">Temperatrure 4</div>
<div class="t lb" style="left:630.00px;top:766px;transform:scaleX(1.0629)"><span class="pa">(</span><span class="bx">☒☒☒☒☒☒☒</span><span class="pa">)</span></div>
<div class="t vl" style="left:714.25px;top:771px;transform:scaleX(1.0200)"><span class="n">22.57</span> °C</div>
<div class="t lb" style="left:546.90px;top:781px;transform:scaleX(1.1752)">Temperatrure 3</div>
<div class="t lb" style="left:629.00px;top:781px;transform:scaleX(1.0705)"><span class="pa">(</span><span class="bx">☒☒☒☒☒☒☒</span><span class="pa">)</span></div>
<div class="t vl" style="left:714.25px;top:785px;transform:scaleX(1.0200)"><span class="n">22.88</span> °C</div>
<div class="t lb" style="left:546.90px;top:796px;transform:scaleX(1.1662)">Temperatrure 2</div>
<div class="t lb" style="left:628.75px;top:796px;transform:scaleX(1.0345)"><span class="pa">(</span>BOX 8-15C<span class="pa">)</span></div>
<div class="t vl" style="left:714.25px;top:799px;transform:scaleX(1.0200)"><span class="n">9.58</span> °C</div>
<div class="t lb" style="left:546.90px;top:811px;transform:scaleX(1.1289)">Temperatrure 1</div>
<div class="t lb" style="left:626.90px;top:811px;transform:scaleX(1.0651)"><span class="pa">(</span>BOX 2-8C<span class="pa">)</span></div>
<div class="t vl" style="left:714.25px;top:814px;transform:scaleX(1.0200)"><span class="n">3.87</span> °C</div>
<div class="t ti" style="left:821.25px;top:736px">352592578576118</div>
<div class="t lb" style="left:835.75px;top:766px;transform:scaleX(1.1849)">Temperatrure 4</div>
<div class="t lb" style="left:918.85px;top:766px;transform:scaleX(1.0629)"><span class="pa">(</span><span class="bx">☒☒☒☒☒☒☒</span><span class="pa">)</span></div>
<div class="t vl" style="left:1003.00px;top:771px;transform:scaleX(1.0200)"><span class="n">23.27</span>°C</div>
<div class="t lb" style="left:835.75px;top:781px;transform:scaleX(1.1752)">Temperatrure 3</div>
<div class="t lb" style="left:917.85px;top:781px;transform:scaleX(1.0705)"><span class="pa">(</span><span class="bx">☒☒☒☒☒☒☒</span><span class="pa">)</span></div>
<div class="t vl" style="left:1003.00px;top:785px;transform:scaleX(1.0200)"><span class="n">30.7<span class="o">1</span></span> °C</div>
<div class="t lb" style="left:835.75px;top:796px;transform:scaleX(1.1662)">Temperatrure 2</div>
<div class="t lb" style="left:917.60px;top:796px;transform:scaleX(1.0345)"><span class="pa">(</span>BOX 8-15C<span class="pa">)</span></div>
<div class="t vl" style="left:1003.00px;top:799px;transform:scaleX(1.0200)"><span class="n">23.4</span> °C</div>
<div class="t lb" style="left:835.75px;top:811px;transform:scaleX(1.1289)">Temperatrure 1</div>
<div class="t lb" style="left:915.75px;top:811px;transform:scaleX(1.0651)"><span class="pa">(</span>BOX 2-8C<span class="pa">)</span></div>
<div class="t vl" style="left:1003.00px;top:814px;transform:scaleX(1.0200)"><span class="n">30.72</span> °C</div>
<div class="t ti" style="left:1111.25px;top:736px">352592578576126</div>
<div class="t lb" style="left:1125.75px;top:766px;transform:scaleX(1.1849)">Temperatrure 4</div>
<div class="t lb" style="left:1208.85px;top:766px;transform:scaleX(1.0629)"><span class="pa">(</span><span class="bx">☒☒☒☒☒☒☒</span><span class="pa">)</span></div>
<div class="t vl" style="left:1288.25px;top:771px;transform:scaleX(1.0200)"><span class="n">22.95</span> °C</div>
<div class="t lb" style="left:1125.75px;top:781px;transform:scaleX(1.1752)">Temperatrure 3</div>
<div class="t lb" style="left:1207.85px;top:781px;transform:scaleX(1.0705)"><span class="pa">(</span><span class="bx">☒☒☒☒☒☒☒</span><span class="pa">)</span></div>
<div class="t vl" style="left:1288.25px;top:785px;transform:scaleX(1.0200)"><span class="n">22.46</span> °C</div>
<div class="t lb" style="left:1125.75px;top:796px;transform:scaleX(1.1662)">Temperatrure 2</div>
<div class="t lb" style="left:1207.60px;top:796px;transform:scaleX(1.0345)"><span class="pa">(</span>BOX 8-15C<span class="pa">)</span></div>
<div class="t vl" style="left:1288.25px;top:799px;transform:scaleX(1.0200)"><span class="n">8.58</span> °C</div>
<div class="t lb" style="left:1125.75px;top:811px;transform:scaleX(1.1289)">Temperatrure 1</div>
<div class="t lb" style="left:1205.75px;top:811px;transform:scaleX(1.0651)"><span class="pa">(</span>BOX 2-8C<span class="pa">)</span></div>
<div class="t vl" style="left:1288.25px;top:814px;transform:scaleX(1.0200)"><span class="n">7.76</span> °C</div>
</div></div>
</body></html>
